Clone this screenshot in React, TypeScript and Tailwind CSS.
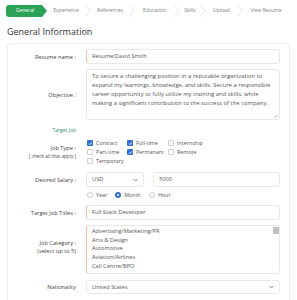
import React from "react";

const categories = [
  "Advertising/Marketing/PR",
  "Arts & Design",
  "Automotive",
  "Aviation/Airlines",
  "Call Centre/BPO",
  "Construction/Architecture",
];

const objective = [
  "To secure a challenging position in a reputable organization to",
  "expand my learnings, knowledge, and skills. Secure a responsible",
  "career opportunity to fully utilize my training and skills, while",
  "making a significant contribution to the success of the company.",
];

function Chevron() {
  return (
    <svg width="6" height="12" viewBox="0 0 6 12" className="shrink-0">
      <path d="M0.5 0.5 L5.5 6 L0.5 11.5" fill="none" stroke="#e4e4e4" strokeWidth="1" />
    </svg>
  );
}

function Tab({ w, children }: { w: string; children: React.ReactNode }) {
  return <span className={`${w} shrink-0 whitespace-nowrap text-center`}>{children}</span>;
}

function Check({ on }: { on?: boolean }) {
  return on ? (
    <span className="flex h-[6px] w-[6px] shrink-0 items-center justify-center rounded-[1px] bg-[#2f6fd6]">
      <svg width="5" height="5" viewBox="0 0 5 5">
        <path d="M1 2.6 L2 3.6 L4 1.3" fill="none" stroke="#fff" strokeWidth="0.9" />
      </svg>
    </span>
  ) : (
    <span className="h-[6px] w-[6px] shrink-0 rounded-[1px] border border-[#cfcfcf] bg-white" />
  );
}

function Radio({ on }: { on?: boolean }) {
  return on ? (
    <span className="flex h-[6px] w-[6px] items-center justify-center rounded-full bg-[#2f6fd6]">
      <span className="h-[2px] w-[2px] rounded-full bg-white" />
    </span>
  ) : (
    <span className="h-[6px] w-[6px] rounded-full border border-[#cfcfcf] bg-white" />
  );
}

function Caret() {
  return (
    <svg width="5" height="4" viewBox="0 0 5 4">
      <path d="M0.5 1 L2.5 3 L4.5 1" fill="none" stroke="#666" strokeWidth="0.8" />
    </svg>
  );
}

function Row({ label, className, children }: { label: React.ReactNode; className?: string; children: React.ReactNode }) {
  return (
    <div className={`flex items-center ${className ?? ""}`}>
      <div className="w-[68px] shrink-0 text-right text-[5.7px] leading-[8px] text-[#444]">{label}</div>
      <div className="ml-[10px] min-w-0 flex-1">{children}</div>
    </div>
  );
}

const box = "rounded-[3px] border border-[#e8e8e8] bg-white text-[5.7px] text-[#555]";

export default function App() {
  return (
    <div className="h-[300px] w-[297px] overflow-hidden bg-white font-['Open_Sans','Noto_Sans',sans-serif]">
      {/* step tabs */}
      <div className="flex items-center pl-[6px] pt-[5px] text-[5px] text-[#808080]">
        <div className="flex shrink-0 items-center">
          <div className="flex h-[12px] w-[36px] items-center justify-center rounded-l-[3px] bg-[#2aa357] pl-[2px] text-white">
            General
          </div>
          <div className="h-0 w-0 border-y-[6px] border-l-[5px] border-y-transparent border-l-[#2aa357]" />
        </div>
        <Tab w="w-[38px]">Experience</Tab>
        <Chevron />
        <Tab w="w-[38px]">References</Tab>
        <Chevron />
        <Tab w="w-[39px]">Education</Tab>
        <Chevron />
        <Tab w="w-[20px]">Skills</Tab>
        <Chevron />
        <Tab w="w-[31px]">Upload</Tab>
        <Chevron />
        <Tab w="w-[46px]">View Resume</Tab>
      </div>

      <h1 className="mt-[9px] pl-[7px] text-[9px] leading-[12px] text-[#333]">General Information</h1>

      <div className="mx-[7px] mt-[5px] h-[280px] rounded-[4px] border border-[#eeeeee] pr-[9px] pt-[5px]">
        <Row label="Resume name :">
          <div className={`${box} flex h-[15px] items-center border-l-[#f2c09c] px-[5px]`}>Resume:David Smith</div>
        </Row>

        <Row label="Objective :" className="mt-[5px]">
          <div className={`${box} relative h-[51px] whitespace-nowrap px-[5px] pt-[2px] text-[5.9px] leading-[9px]`}>
            {objective.map((l) => (
              <div key={l}>{l}</div>
            ))}
            <svg width="4" height="4" viewBox="0 0 4 4" className="absolute bottom-[1px] right-[1px]">
              <path d="M3.5 0.5 L0.5 3.5 M3.5 2 L2 3.5" stroke="#999" strokeWidth="0.6" />
            </svg>
          </div>
        </Row>

        <div className="mt-[7px] w-[68px] text-right text-[5px] leading-[7px] text-[#2f8a63]">Target Job</div>

        <Row
          className="mt-[6px]"
          label={
            <>
              Job Type :
              <div className="text-[4.7px]">[ check all that apply ]</div>
            </>
          }
        >
          <div className="grid grid-cols-[40px_41px_40px] gap-y-[3px] pl-[1px] text-[5.4px] leading-[6px] text-[#555]">
            <div className="flex items-center gap-[3px]"><Check on />Contract</div>
            <div className="flex items-center gap-[3px]"><Check on />Full-time</div>
            <div className="flex items-center gap-[3px]"><Check />Internship</div>
            <div className="flex items-center gap-[3px]"><Check />Part-time</div>
            <div className="flex items-center gap-[3px]"><Check on />Permanant</div>
            <div className="flex items-center gap-[3px]"><Check />Remote</div>
            <div className="flex items-center gap-[3px]"><Check />Temporary</div>
          </div>
        </Row>

        <Row label="Desired Salary :" className="mt-[8px]">
          <div className="flex gap-[9px]">
            <div className={`${box} flex h-[15px] w-[58px] items-center justify-between px-[5px]`}>
              USD <Caret />
            </div>
            <div className={`${box} flex h-[15px] flex-1 items-center px-[5px]`}>5000</div>
          </div>
        </Row>

        <Row label="" className="mt-[5px]">
          <div className="flex items-center pl-[1px] text-[5.4px] leading-[6px] text-[#555]">
            <span className="flex items-center gap-[3px]"><Radio />Year</span>
            <span className="ml-[8px] flex items-center gap-[3px]"><Radio on />Month</span>
            <span className="ml-[8px] flex items-center gap-[3px]"><Radio />Hour</span>
          </div>
        </Row>

        <Row label="Target Job Titles :" className="mt-[7px]">
          <div className={`${box} flex h-[15px] items-center border-l-[#f2c09c] px-[5px]`}>Full Stack Developer</div>
        </Row>

        <Row
          className="mt-[5px]"
          label={
            <div className="pb-[6px]">
              Job Category :
              <div>(select up to 5)</div>
            </div>
          }
        >
          <div className={`${box} relative h-[49px] overflow-hidden border-l-[#f2c09c] pl-[5px] pt-[1px] leading-[8.7px]`}>
            {categories.map((c) => (
              <div key={c} className="whitespace-nowrap">{c}</div>
            ))}
            <div className="absolute right-0 top-[1px] h-[7px] w-[6px] bg-[#c1c1c1]" />
          </div>
        </Row>

        <Row label="Nationality" className="mt-[6px]">
          <div className={`${box} flex h-[14px] items-center justify-between px-[5px]`}>
            United States <Caret />
          </div>
        </Row>
      </div>
    </div>
  );
}
